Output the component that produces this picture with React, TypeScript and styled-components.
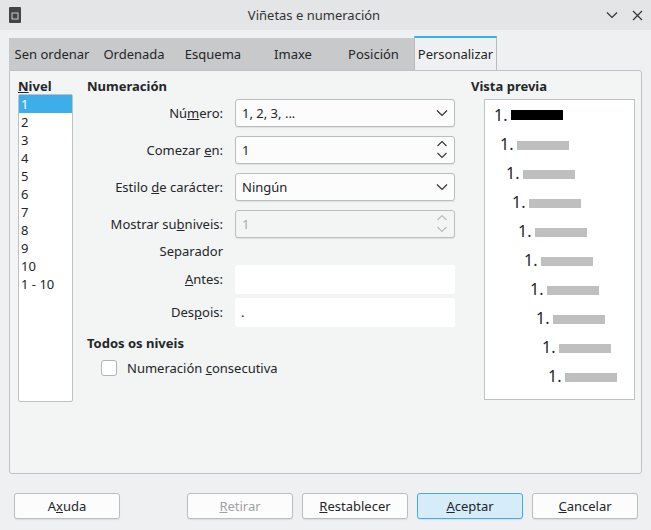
import React from "react";
import styled, { createGlobalStyle } from "styled-components";

const G = createGlobalStyle`
  html,body{margin:0;padding:0;background:#eff0f1;}
  body{font-family:"Noto Sans","DejaVu Sans",sans-serif;font-size:13px;color:#232629;}
`;
const Win = styled.div`width:651px;height:530px;display:flex;flex-direction:column;background:#eff0f1;overflow:hidden;`;
const Title = styled.div`height:30px;display:flex;align-items:center;padding:0 8px;background:#e3e5e7;`;
const TitleText = styled.div`flex:1;text-align:center;font-size:13px;color:#333;`;
const TitleBtns = styled.div`display:flex;gap:14px;align-items:center;`;
const Body = styled.div`padding:8px 9px 0 9px;display:flex;flex-direction:column;`;
const Tabs = styled.div`display:flex;height:32px;width:488px;background:#c8c9ca;`;
const Tab = styled.div<{ $a?: boolean; $w: number }>`
  width:${p => p.$w}px;flex:none;box-sizing:border-box;display:flex;align-items:center;justify-content:center;font-size:13px;
  ${p => p.$a ? "background:#eff0f1;border-top:2px solid #3daee9;border-left:1px solid #bbb;border-right:1px solid #bbb;margin-top:-2px;" : ""}
`;
const Panel = styled.div`height:396px;border:1px solid #c0c1c2;border-radius:0 3px 3px 3px;background:#f3f4f4;display:flex;padding:6px 8px 0 8px;gap:14px;`;
const Head = styled.div`font-weight:bold;font-size:13px;height:17px;`;
const LevelCol = styled.div`width:55px;flex:none;display:flex;flex-direction:column;`;
const List = styled.div`height:306px;background:#fff;border:1px solid #c0c1c2;border-radius:2px;`;
const Item = styled.div<{ $s?: boolean }>`height:18px;line-height:18px;padding-left:2px;font-size:13px;${p => p.$s ? "background:#3daee9;color:#fff;" : ""}`;
const Mid = styled.div`width:370px;flex:none;display:flex;flex-direction:column;`;
const Row = styled.div<{ $h: number }>`display:flex;align-items:center;height:${p => p.$h}px;gap:12px;`;
const EndRow = styled(Row)`align-items:flex-end;`;
const CheckRow = styled(Row)`padding-left:14px;gap:10px;`;
const Label = styled.div`width:136px;text-align:right;color:#232629;`;
const Field = styled.div<{ $dis?: boolean; $flat?: boolean }>`
  width:220px;flex:none;height:${p => p.$flat ? 29 : 28}px;box-sizing:border-box;display:flex;align-items:center;padding:0 6px;
  background:${p => p.$flat ? "#fff" : p.$dis ? "#f3f4f4" : "#fcfcfc"};
  border:${p => p.$flat ? "none" : "1px solid #bcbdbe"};border-radius:3px;
  color:${p => p.$dis ? "#aaa" : "#232629"};justify-content:space-between;
  ${p => p.$flat ? "" : "box-shadow:0 1px 1px rgba(0,0,0,0.08);"}
`;
const Check = styled.div`width:14px;height:14px;border:1px solid #b0b1b2;border-radius:3px;background:#fff;`;
const Right = styled.div`flex:1;display:flex;flex-direction:column;padding-left:0;`;
const Preview = styled.div`margin:5px 0 0 13px;width:151px;height:301px;background:#fff;border:1px solid #c0c1c2;box-sizing:border-box;`;
const PRow = styled.div<{ $i: number }>`height:29px;display:flex;align-items:center;padding-left:${p => 9 + p.$i * 6}px;font-size:16px;gap:4px;`;
const Bar = styled.div<{ $b?: boolean }>`width:52px;height:${p => p.$b ? 10 : 9}px;background:${p => p.$b ? "#000" : "#bfbfbf"};margin-top:${p => p.$b ? 0 : 3}px;`;
const Footer = styled.div`display:flex;padding:19px 13px 0 14px;gap:9px;`;
const Btn = styled.div<{ $dis?: boolean; $p?: boolean }>`
  width:106px;height:26px;display:flex;align-items:center;justify-content:center;box-sizing:border-box;
  border:1px solid ${p => p.$p ? "#3daee9" : "#bcbdbe"};border-radius:3px;background:${p => p.$p ? "#d6ecf8" : "#fcfcfc"};
  color:${p => p.$dis ? "#a0a1a2" : "#232629"};box-shadow:0 1px 1px rgba(0,0,0,0.08);
`;
const Sp = styled.div`flex:1;`;

const Chev = () => <svg width="12" height="8" viewBox="0 0 12 8"><path d="M1 1.5l5 5 5-5" fill="none" stroke="#333" strokeWidth="1.2" /></svg>;
const Spin = ({ c }: { c: string }) => <svg width="12" height="22" viewBox="0 0 12 22"><path d="M1.5 7l4.5-4.5 4.5 4.5M1.5 14l4.5 4.5 4.5-4.5" fill="none" stroke={c} strokeWidth="1.1" /></svg>;

export default function App() {
  return (
    <Win>
      <G />
      <Title>
        <svg width="14" height="18" viewBox="0 0 14 18"><rect x="1" y="1" width="12" height="16" fill="#444" rx="1" /><rect x="4" y="7" width="6" height="6" fill="none" stroke="#ccc" /></svg>
        <TitleText>Viñetas e numeración</TitleText>
        <TitleBtns>
          <svg width="12" height="8" viewBox="0 0 12 8"><path d="M1 1.5l5 5 5-5" fill="none" stroke="#333" strokeWidth="1.2" /></svg>
          <svg width="11" height="11" viewBox="0 0 11 11"><path d="M1 1l9 9M10 1l-9 9" stroke="#333" strokeWidth="1.2" /></svg>
        </TitleBtns>
      </Title>
      <Body>
        <Tabs>
          <Tab $w={86}>Sen ordenar</Tab>
          <Tab $w={78}>Ordenada</Tab>
          <Tab $w={80}>Esquema</Tab>
          <Tab $w={80}>Imaxe</Tab>
          <Tab $w={81}>Posición</Tab>
          <Tab $w={83} $a>Personalizar</Tab>
        </Tabs>
        <Panel>
          <LevelCol>
            <Head><u>N</u>ivel</Head>
            <List>
              {["1","2","3","4","5","6","7","8","9","10","1 - 10"].map((n, i) => <Item key={n} $s={i === 0}>{n}</Item>)}
            </List>
          </LevelCol>
          <Mid>
            <Head>Numeración</Head>
            <Row $h={38}><Label>Nú<u>m</u>ero:</Label><Field>1, 2, 3, ...<Chev /></Field></Row>
            <Row $h={36}><Label>Comezar <u>e</u>n:</Label><Field>1<Spin c="#333" /></Field></Row>
            <Row $h={37}><Label>Estilo <u>d</u>e carácter:</Label><Field>Ningún<Chev /></Field></Row>
            <Row $h={37}><Label>Mostrar su<u>b</u>niveis:</Label><Field $dis>1<Spin c="#bbb" /></Field></Row>
            <Row $h={17}><Label>Separador</Label></Row>
            <Row $h={40}><Label><u>A</u>ntes:</Label><Field $flat /></Row>
            <Row $h={26}><Label>Des<u>p</u>ois:</Label><Field $flat>.</Field></Row>
            <EndRow $h={26}><Head>Todos os niveis</Head></EndRow>
            <CheckRow $h={34}><Check /><span>Numeración <u>c</u>onsecutiva</span></CheckRow>
          </Mid>
          <Right>
            <Head>Vista previa</Head>
            <Preview>
              {Array.from({ length: 10 }).map((_, i) => (
                <PRow key={i} $i={i}>1.<Bar $b={i === 0} /></PRow>
              ))}
            </Preview>
          </Right>
        </Panel>
      </Body>
      <Footer>
        <Btn>A<u>x</u>uda</Btn>
        <Sp />
        <Btn $dis><u>R</u>etirar</Btn>
        <Btn><u>R</u>establecer</Btn>
        <Btn $p><u>A</u>ceptar</Btn>
        <Btn><u>C</u>ancelar</Btn>
      </Footer>
    </Win>
  );
}
